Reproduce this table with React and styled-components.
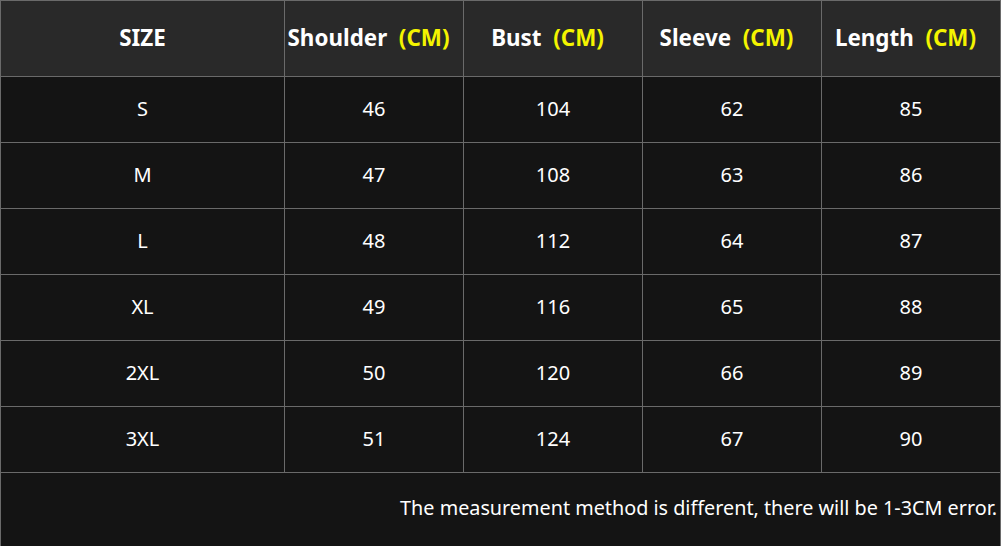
import React from "react";
import styled, { createGlobalStyle } from "styled-components";

const Global = createGlobalStyle`
  html, body { margin: 0; padding: 0; background: #141414; }
  body { font-family: "Noto Sans", "Open Sans", sans-serif; }
`;

const Grid = styled.div`
  display: grid;
  grid-template-columns: 283px repeat(4, 178px);
  grid-template-rows: 75px repeat(6, 65px) 73px;
  gap: 1px;
  padding: 1px 1px 0 1px;
  background: #6a6a6a;
  width: 1001px;
  box-sizing: border-box;
`;

const HeadCell = styled.div`
  background: #292929;
  color: #ffffff;
  font-weight: 700;
  font-size: 22.4px;
  display: flex;
  align-items: center;
  justify-content: center;
  white-space: pre;
  padding-bottom: 3px;
  padding-right: ${(p) => (p.$hasUnit ? "11px" : "0")};
  box-sizing: border-box;
`;

const Unit = styled.span`
  color: #f4f400;
`;

const Cell = styled.div`
  background: #141414;
  color: #ffffff;
  font-size: 20px;
  display: flex;
  align-items: center;
  justify-content: center;
  padding-bottom: 3px;
`;

const Note = styled.div`
  grid-column: 1 / -1;
  background: #141414;
  color: #ffffff;
  font-size: 19.8px;
  display: flex;
  align-items: center;
  justify-content: flex-end;
  padding-right: 3px;
  padding-bottom: 4px;
`;

const headers = [
  ["SIZE", null],
  ["Shoulder", "(CM)"],
  ["Bust", "(CM)"],
  ["Sleeve", "(CM)"],
  ["Length", "(CM)"],
];

const rows = [
  ["S", 46, 104, 62, 85],
  ["M", 47, 108, 63, 86],
  ["L", 48, 112, 64, 87],
  ["XL", 49, 116, 65, 88],
  ["2XL", 50, 120, 66, 89],
  ["3XL", 51, 124, 67, 90],
];

export default function App() {
  return (
    <>
      <Global />
      <Grid>
        {headers.map(([label, unit]) => (
          <HeadCell key={label} $hasUnit={!!unit}>
            {label}
            {unit && <Unit>{"  " + unit}</Unit>}
          </HeadCell>
        ))}
        {rows.map((r) =>
          r.map((v, i) => <Cell key={r[0] + i}>{v}</Cell>)
        )}
        <Note>The measurement method is different, there will be 1-3CM error.</Note>
      </Grid>
    </>
  );
}
